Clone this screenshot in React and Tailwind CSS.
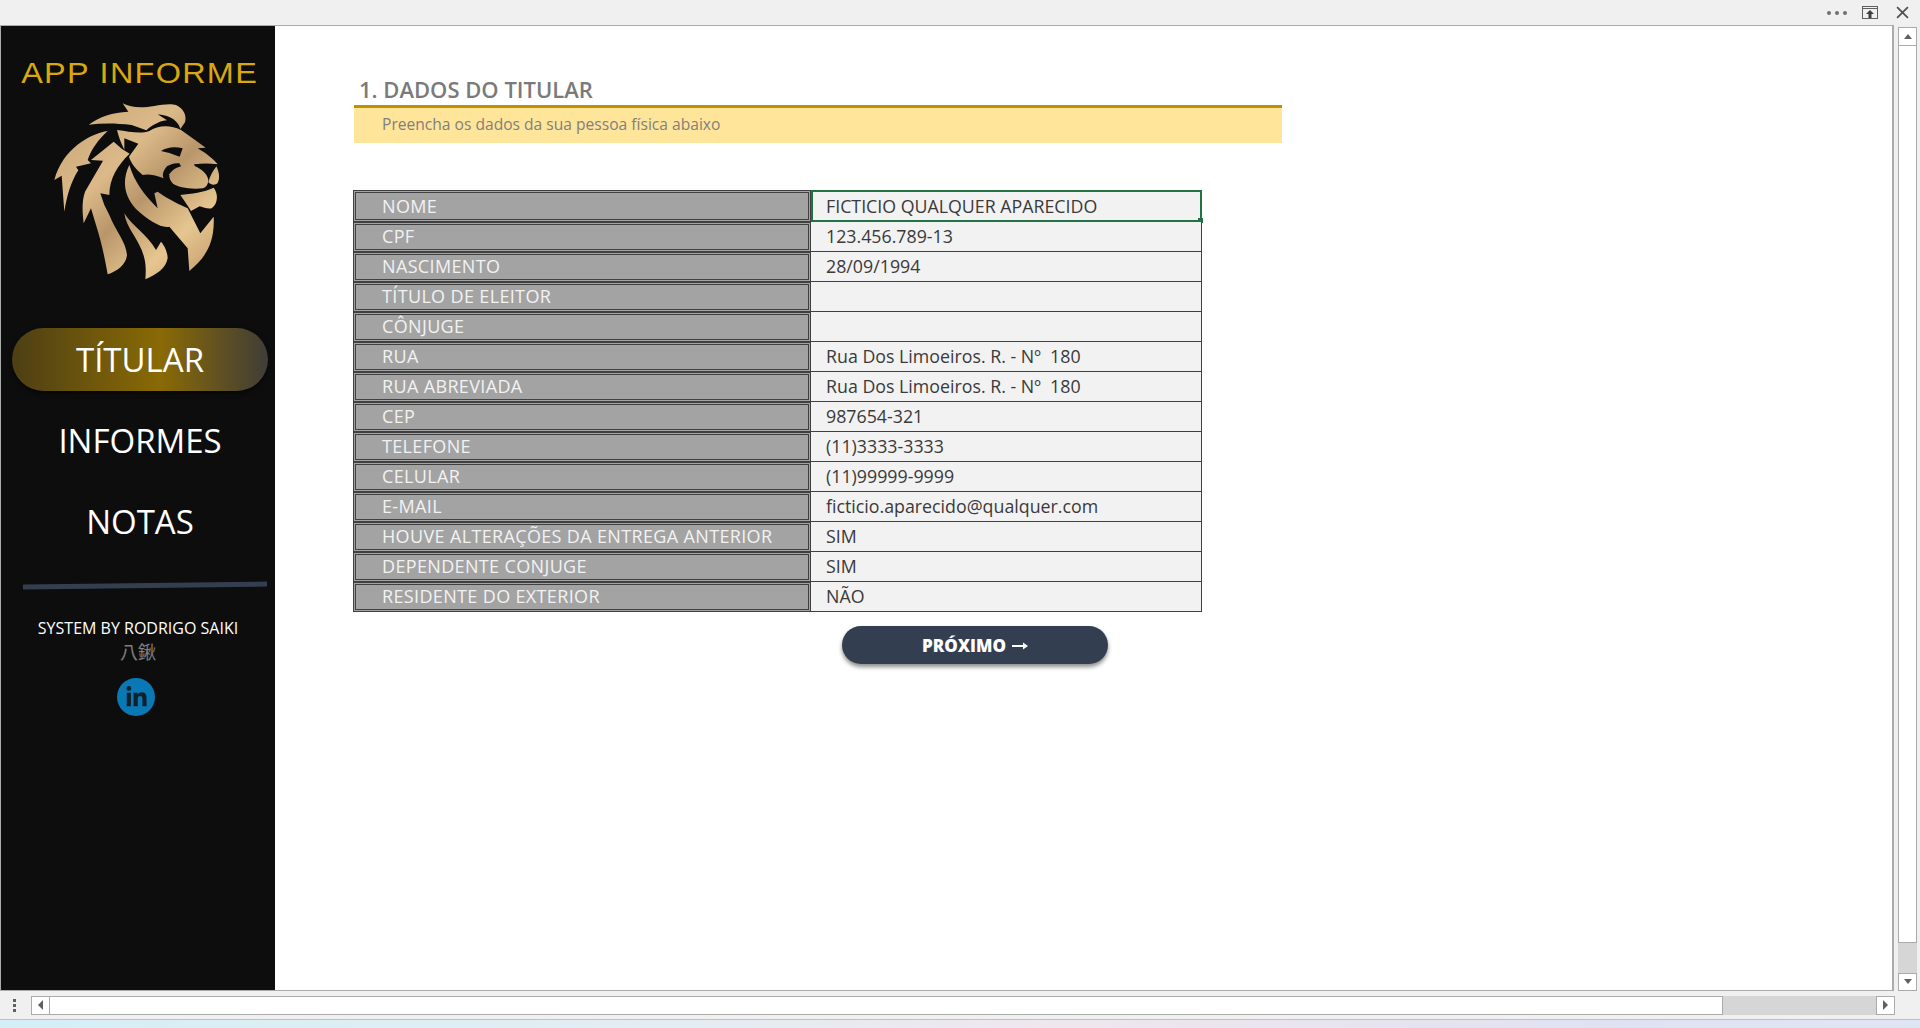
import React from "react";
import { FaLinkedinIn } from "react-icons/fa";

const rows = [
  ["NOME", "FICTICIO QUALQUER APARECIDO"],
  ["CPF", "123.456.789-13"],
  ["NASCIMENTO", "28/09/1994"],
  ["TÍTULO DE ELEITOR", ""],
  ["CÔNJUGE", ""],
  ["RUA", "Rua Dos Limoeiros. R. - Nº  180"],
  ["RUA ABREVIADA", "Rua Dos Limoeiros. R. - Nº  180"],
  ["CEP", "987654-321"],
  ["TELEFONE", "(11)3333-3333"],
  ["CELULAR", "(11)99999-9999"],
  ["E-MAIL", "ficticio.aparecido@qualquer.com"],
  ["HOUVE ALTERAÇÕES DA ENTREGA ANTERIOR", "SIM"],
  ["DEPENDENTE CONJUGE", "SIM"],
  ["RESIDENTE DO EXTERIOR", "NÃO"],
];

const LionLogo = () => (
  <svg viewBox="0 0 570 570" className="w-[190px] h-[190px]">
    <defs>
      <linearGradient id="gold" gradientUnits="userSpaceOnUse" x1="60" y1="60" x2="500" y2="520">
        <stop offset="0" stopColor="#c9a878" />
        <stop offset="0.35" stopColor="#dcb988" />
        <stop offset="0.55" stopColor="#b9966a" />
        <stop offset="0.8" stopColor="#e6c690" />
        <stop offset="1" stopColor="#c8a271" />
      </linearGradient>
    </defs>
    <g fill="url(#gold)">
      {/* crest */}
      <path d="M245 25 C270 38 300 40 340 33 C365 28 390 25 405 30 C428 40 438 62 432 82 L418 102 C412 80 392 62 350 58 L378 76 C360 78 340 85 316 106 L272 90 C225 84 185 84 143 89 C175 65 215 52 262 50 Z" />
      {/* head, runs into the muzzle left of the nose */}
      <path d="M228 105 C265 110 300 118 325 108 C350 92 385 88 420 105 C445 122 472 142 494 158 L470 160 C495 175 518 192 530 208 L460 208 L470 240 L430 232 L415 205 C400 203 388 208 378 214 C368 226 362 238 368 250 C345 240 320 236 305 240 C285 222 270 205 264 185 L292 146 L250 130 L250 164 C240 145 233 125 228 105 Z" />
      {/* muzzle */}
      <path d="M385 238 C395 218 425 208 458 212 C485 222 502 240 502 258 C500 270 495 276 486 280 C450 284 410 278 395 265 C388 258 384 248 385 238 Z" />
      <path d="M526 214 C535 232 537 250 530 264 C522 272 510 270 502 262 C506 245 515 228 526 214 Z" />
      <path d="M418 300 C450 296 490 292 518 278 C532 295 532 325 512 340 C500 342 488 338 476 334 L450 348 C440 330 428 315 418 300 Z" />
      {/* mane */}
      <path d="M200 108 C150 115 65 160 40 255 L62 242 L70 350 C78 300 90 260 112 226 L105 215 L150 205 L140 195 C150 165 170 135 200 108 Z" />
      <path d="M218 140 L150 195 L186 197 L132 290 C122 320 124 350 128 385 L150 340 L165 390 C178 430 190 480 200 538 C225 530 256 510 258 480 C255 440 225 410 205 360 L190 330 L178 295 L205 300 C205 250 230 210 266 176 L243 162 Z" />
      <path d="M265 210 C245 250 245 300 285 342 C325 378 360 400 385 395 L440 460 L445 528 C490 490 522 450 518 365 L478 415 L440 340 C420 330 385 315 350 290 L340 295 L350 340 C310 300 280 260 265 210 Z" />
      <path d="M250 355 C255 400 300 440 310 490 C315 510 315 530 313 553 C345 540 375 520 380 490 C380 470 368 448 360 440 L345 465 C320 420 270 390 250 355 Z" />
    </g>
    <path d="M360 168 C380 155 402 154 425 160 L416 185 L385 174 Z" fill="#0d0d0d" />
    <path d="M458 209 C480 205 505 205 528 208 C522 222 512 232 500 238 C490 226 475 216 458 209 Z" fill="#0d0d0d" />
  </svg>
);

const NavItem = ({ children, active }) => (
  <div
    className={`ml-[11px] w-[256px] h-[63px] flex items-center justify-center rounded-full text-[33px] text-white ${
      active ? "bg-[linear-gradient(90deg,#4d3f14_0%,#8a6a05_58%,#3f3d38_100%)] shadow-[0_2px_4px_rgba(0,0,0,0.6)]" : ""
    }`}
  >
    {children}
  </div>
);

const Sidebar = () => (
  <aside className="w-[274px] shrink-0 bg-[#0d0d0d] flex flex-col font-['Open_Sans',sans-serif]">
    <div className="mt-[29px] pl-[3px] text-center text-[#d9a80f] text-[30px] leading-[36px] tracking-[1.2px] font-['Liberation_Sans',sans-serif] whitespace-nowrap scale-x-[1.08]">
      APP INFORME
    </div>
    <div className="mt-[4px] ml-[40px]">
      <LionLogo />
    </div>
    <div className="mt-[43px] flex flex-col gap-[18px]">
      <NavItem active>TÍTULAR</NavItem>
      <NavItem>INFORMES</NavItem>
      <NavItem>NOTAS</NavItem>
    </div>
    <div className="mt-[30px] ml-[22px] w-[244px] h-[5px] bg-[#333f50] -rotate-[0.7deg]" />
    <div className="mt-[30px] text-center text-white text-[16px] leading-[20px] whitespace-nowrap">
      SYSTEM BY RODRIGO SAIKI
    </div>
    <div className="text-center text-[#7f7f7f] text-[18px] leading-[26px] font-['Noto_Sans_CJK_JP',sans-serif]">
      八鍬
    </div>
    <div className="mt-[14px] ml-[116px] w-[38px] h-[38px] rounded-full bg-[#0a78b5] flex items-center justify-center text-[#10202c]">
      <FaLinkedinIn size={23} />
    </div>
  </aside>
);

const DataTable = () => (
  <div className="mt-[47px] -ml-px grid grid-cols-[458px_391px] w-[849px] font-['Open_Sans',sans-serif]">
    {rows.map(([label, value], i) => (
      <React.Fragment key={label}>
        <div
          className={`border-[3px] border-double border-[#404040] bg-[#a3a3a3] text-[#f2f2f2] text-[18px] tracking-[0.35px] pl-[26px] flex items-center whitespace-nowrap ${
            i === 0 ? "h-[32px]" : "h-[30px] pb-[2px]"
          }`}
        >
          {label}
        </div>
        <div
          className={`relative bg-[#f2f2f2] text-[#3a3a3a] text-[17.8px] font-medium flex items-center whitespace-pre ${
            i === 0
              ? "h-[32px] pl-[13px] border-2 border-[#217346]"
              : "h-[30px] pl-[15px] border-r border-b border-[#404040]"
          }`}
        >
          {value}
          {i === 0 && (
            <span className="absolute -right-[3px] -bottom-[3px] w-[5px] h-[5px] bg-[#217346]" />
          )}
        </div>
      </React.Fragment>
    ))}
  </div>
);

const ScrollBtn = ({ dir, className = "" }) => {
  const points = {
    up: "1,7 9,7 5,2",
    down: "1,2 9,2 5,7",
    left: "7,0 7,10 2,5",
    right: "2,0 2,10 7,5",
  };
  return (
    <div className={`bg-white border border-[#ababab] flex items-center justify-center shrink-0 ${className}`}>
      <svg viewBox="0 0 10 10" className="w-[10px] h-[10px]">
        <polygon points={points[dir]} fill="#606060" />
      </svg>
    </div>
  );
};

export default function App() {
  return (
    <div className="w-[1920px] h-[1028px] bg-[#f0f0f0] flex flex-col overflow-hidden">
      {/* title bar */}
      <div className="h-[25px] shrink-0 flex items-center justify-end">
        <div className="flex gap-[4px] mr-[15px]">
          <span className="w-[4px] h-[4px] rounded-full bg-[#707070]" />
          <span className="w-[4px] h-[4px] rounded-full bg-[#707070]" />
          <span className="w-[4px] h-[4px] rounded-full bg-[#707070]" />
        </div>
        <svg viewBox="0 0 16 13" className="w-[16px] h-[13px] mr-[18px]">
          <rect x="0.5" y="0.5" width="15" height="12" fill="none" stroke="#606060" />
          <line x1="0" y1="2.5" x2="16" y2="2.5" stroke="#606060" />
          <path d="M8 4 L12 8 H9.5 V12 H6.5 V8 H4 Z" fill="#404040" />
        </svg>
        <svg viewBox="0 0 12 12" className="w-[13px] h-[13px] mr-[11px]">
          <path d="M1 1 L11 11 M11 1 L1 11" stroke="#505050" strokeWidth="1.6" />
        </svg>
      </div>

      {/* sheet area */}
      <div className="h-[966px] shrink-0 flex">
        <div className="w-[1894px] flex border border-[#ababab] border-r-2">
          <Sidebar />
          <main className="flex-1 bg-white pl-[79px] pt-[48px]">
            <h1 className="ml-[5px] text-[22px] leading-[31px] font-semibold text-[#7a7a7a] font-['Open_Sans',sans-serif]">
              1. DADOS DO TITULAR
            </h1>
            <div className="w-[928px] h-[38px] border-t-[3px] border-[#bf9000] bg-[#ffe599] pl-[28px] pb-[2px] flex items-center text-[15.6px] text-[#7f7f7f] font-['Open_Sans',sans-serif]">
              Preencha os dados da sua pessoa física abaixo
            </div>
            <DataTable />
            <div className="mt-[14px] ml-[488px] w-[266px] h-[38px] pt-[2px] rounded-full bg-[#333f50] shadow-[0_3px_4px_rgba(0,0,0,0.45)] flex items-center justify-center gap-[6px] text-white text-[17px] font-black font-['Open_Sans',sans-serif]">
              PRÓXIMO
              <svg viewBox="0 0 16 8" className="w-[16px] h-[8px]">
                <path d="M0 3 H11 V0.5 L16 4 L11 7.5 V5 H0 Z" fill="#fff" />
              </svg>
            </div>
          </main>
        </div>
        {/* vertical scrollbar */}
        <div className="ml-[4px] mt-[2px] w-[19px] flex flex-col">
          <ScrollBtn dir="up" className="h-[19px]" />
          <div className="h-[897px] bg-white border-x border-b border-[#ababab]" />
          <div className="flex-1 bg-[#d6d6d6]" />
          <ScrollBtn dir="down" className="h-[18px]" />
        </div>
      </div>

      {/* bottom bar */}
      <div className="h-[29px] shrink-0 flex items-center border-b border-[#c0c0c0]">
        <div className="w-[31px] flex flex-col items-center gap-[2px] pr-[3px]">
          <span className="w-[3px] h-[3px] bg-[#606060]" />
          <span className="w-[3px] h-[3px] bg-[#606060]" />
          <span className="w-[3px] h-[3px] bg-[#606060]" />
        </div>
        <ScrollBtn dir="left" className="w-[19px] h-[19px]" />
        <div className="w-[1673px] h-[19px] bg-white border border-l-0 border-[#ababab]" />
        <div className="w-[153px] h-[19px] bg-[#d6d6d6]" />
        <ScrollBtn dir="right" className="w-[19px] h-[19px]" />
      </div>

      {/* desktop strip */}
      <div className="flex-1 bg-[linear-gradient(90deg,#d5eff6_0%,#e3edf3_35%,#f0e6ee_55%,#dfe2f2_85%,#dfe6f3_100%)]" />
    </div>
  );
}
